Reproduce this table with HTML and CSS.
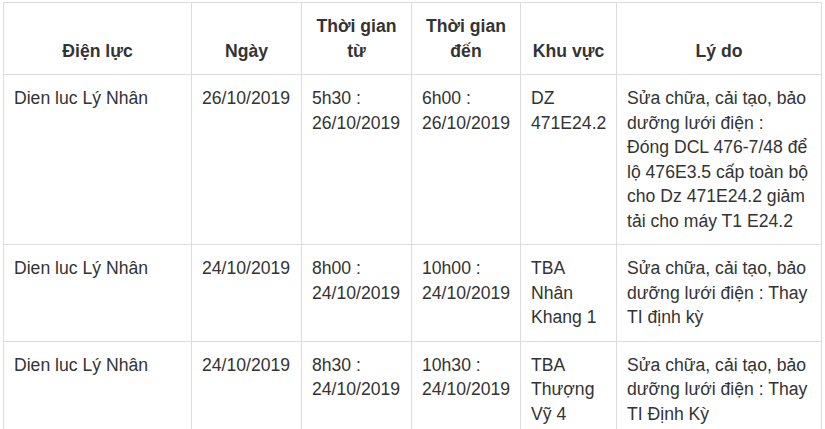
FILE: index.html
```html
<!DOCTYPE html>
<html lang="vi">
<head>
<meta charset="utf-8">
<title>Lịch cắt điện</title>
<link rel="stylesheet" href="styles.css">
</head>
<body>
<div class="wrap">
<table class="sched">
  <colgroup>
    <col class="c1"><col class="c2"><col class="c3"><col class="c4"><col class="c5"><col class="c6">
  </colgroup>
  <thead>
    <tr>
      <th>Điện lực</th>
      <th>Ngày</th>
      <th>Thời gian từ</th>
      <th>Thời gian đến</th>
      <th>Khu vực</th>
      <th>Lý do</th>
    </tr>
  </thead>
  <tbody>
    <tr>
      <td>Dien luc Lý Nhân</td>
      <td>26/10/2019</td>
      <td>5h30 : 26/10/2019</td>
      <td>6h00 : 26/10/2019</td>
      <td>DZ 471E24.2</td>
      <td>Sửa chữa, cải tạo, bảo dưỡng lưới điện :<br>Đóng DCL 476-7/48 để lộ 476E3.5 cấp toàn bộ cho Dz 471E24.2 giảm tải cho máy T1 E24.2</td>
    </tr>
    <tr>
      <td>Dien luc Lý Nhân</td>
      <td>24/10/2019</td>
      <td>8h00 : 24/10/2019</td>
      <td>10h00 : 24/10/2019</td>
      <td>TBA Nhân Khang 1</td>
      <td>Sửa chữa, cải tạo, bảo dưỡng lưới điện : Thay TI định kỳ</td>
    </tr>
    <tr>
      <td>Dien luc Lý Nhân</td>
      <td>24/10/2019</td>
      <td>8h30 : 24/10/2019</td>
      <td>10h30 : 24/10/2019</td>
      <td>TBA Thượng Vỹ 4</td>
      <td>Sửa chữa, cải tạo, bảo dưỡng lưới điện : Thay TI Định Kỳ</td>
    </tr>
  </tbody>
</table>
</div>
</body>
</html>
```

FILE: styles.css
```css
html, body {
  margin: 0;
  padding: 0;
  background: #fff;
}
.wrap {
  padding: 2px 0 0 3px;
}
.sched {
  border-collapse: collapse;
  table-layout: fixed;
  width: 818px;
  font-family: "Liberation Sans", Arial, sans-serif;
  font-size: 17.6px;
  line-height: 24.5px;
  color: #333;
}
.c1 { width: 188px; }
.c2 { width: 110px; }
.c3 { width: 110px; }
.c4 { width: 109px; }
.c5 { width: 96px; }
.c6 { width: 205px; }
.sched th,
.sched td {
  border: 1px solid #ddd;
  padding: 11px 10px;
}
.sched th {
  font-weight: bold;
  text-align: center;
  vertical-align: bottom;
}
.sched td {
  text-align: left;
  vertical-align: top;
}
```
